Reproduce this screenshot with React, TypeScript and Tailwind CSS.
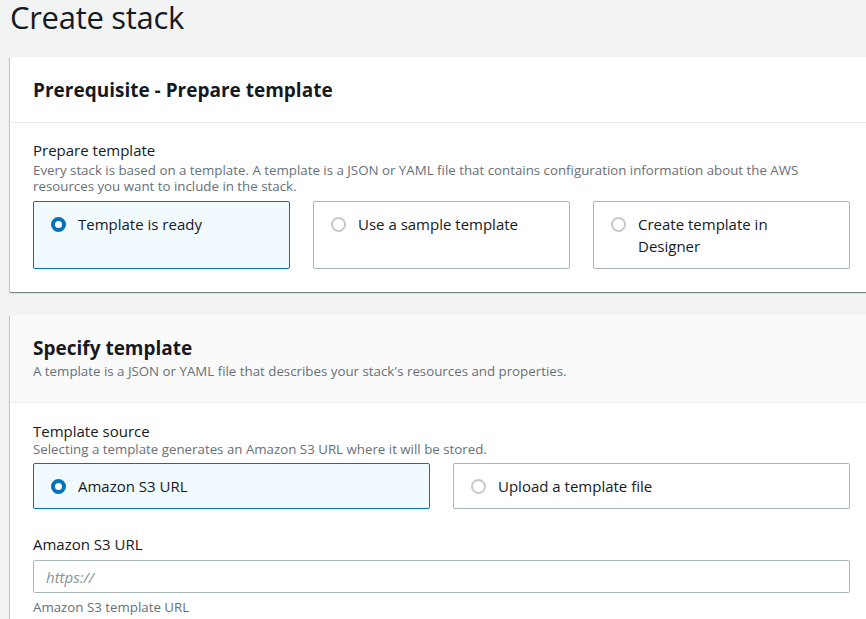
import { useState } from 'react';

const font = { fontFamily: '"Open Sans", "Noto Sans", Arial, sans-serif' };

function Radio({ checked }: { checked: boolean }) {
  return checked ? (
    <span className="mt-[4px] box-border block h-[15px] w-[15px] shrink-0 rounded-full border-[4px] border-[#0073bb] bg-white" />
  ) : (
    <span className="mt-[4px] box-border block h-[15px] w-[15px] shrink-0 rounded-full border-2 border-[#c3c9ca] bg-white" />
  );
}

function Tile({
  label,
  checked,
  onClick,
}: {
  label: string;
  checked: boolean;
  onClick: () => void;
}) {
  return (
    <button
      onClick={onClick}
      className={`flex items-start gap-[12px] rounded-[2px] border px-[17px] py-[11px] text-left text-[15px] leading-[22px] text-[#16191f] ${
        checked ? 'border-[#0073bb] bg-[#f1faff]' : 'border-[#aab7b8] bg-white'
      }`}
    >
      <Radio checked={checked} />
      <span className="pr-[8px]">{label}</span>
    </button>
  );
}

export default function App() {
  const [prepare, setPrepare] = useState('ready');
  const [source, setSource] = useState('s3');

  const cardShadow =
    'shadow-[0_1px_1px_0_rgba(0,28,36,0.3),1px_1px_1px_0_rgba(0,28,36,0.15),-1px_1px_1px_0_rgba(0,28,36,0.15)]';

  return (
    <div className="min-h-screen w-[866px] overflow-hidden bg-[#f2f3f3] pb-10 text-[#16191f]" style={font}>
      {/* Page title */}
      <h1 className="pl-[10px] text-[31px] leading-[34px] font-normal tracking-[-0.3px]">Create stack</h1>

      {/* Prerequisite card */}
      <section className={`ml-[10px] mt-[23px] w-[863px] bg-white ${cardShadow}`}>
        <div className="flex h-[66px] items-center border-b border-[#eaeded] px-[23px]">
          <h2 className="text-[19px] leading-[24px] font-bold">Prerequisite - Prepare template</h2>
        </div>
        <div className="px-[23px] pt-[17px] pb-[23px]">
          <div className="text-[15px] leading-[20px]">Prepare template</div>
          <p className="mt-[2px] text-[13.3px] leading-[16px] text-[#687078]">
            Every stack is based on a template. A template is a JSON or YAML file that contains configuration information about the AWS
            <br />
            resources you want to include in the stack.
          </p>
          <div className="mt-[7px] grid grid-cols-3 gap-[23px]">
            <Tile label="Template is ready" checked={prepare === 'ready'} onClick={() => setPrepare('ready')} />
            <Tile label="Use a sample template" checked={prepare === 'sample'} onClick={() => setPrepare('sample')} />
            <Tile label="Create template in Designer" checked={prepare === 'designer'} onClick={() => setPrepare('designer')} />
          </div>
        </div>
      </section>

      {/* Specify template card */}
      <section className={`ml-[10px] mt-[23px] w-[863px] bg-white ${cardShadow}`}>
        <div className="border-b border-[#eaeded] bg-[#fafafa] px-[23px] pt-[21px] pb-[23px]">
          <h2 className="text-[19px] leading-[24px] font-bold">Specify template</h2>
          <p className="mt-[3px] text-[13.3px] leading-[16px] text-[#687078]">
            A template is a JSON or YAML file that describes your stack's resources and properties.
          </p>
        </div>
        <div className="px-[23px] pt-[18px] pb-[23px]">
          <div className="text-[15px] leading-[20px]">Template source</div>
          <p className="text-[13.3px] leading-[16px] text-[#687078]">
            Selecting a template generates an Amazon S3 URL where it will be stored.
          </p>
          <div className="mt-[6px] grid grid-cols-2 gap-[23px]">
            <Tile label="Amazon S3 URL" checked={source === 's3'} onClick={() => setSource('s3')} />
            <Tile label="Upload a template file" checked={source === 'upload'} onClick={() => setSource('upload')} />
          </div>

          <label className="mt-[25px] block text-[15px] leading-[20px]">Amazon S3 URL</label>
          <input
            className="mt-[6px] block h-[33px] w-full rounded-[2px] border border-[#aab7b8] bg-white px-[12px] text-[15px] outline-none placeholder:italic placeholder:text-[#879596]"
            placeholder="https://"
            style={font}
          />
          <p className="mt-[6px] text-[13.3px] leading-[16px] text-[#687078]">Amazon S3 template URL</p>
        </div>
      </section>
    </div>
  );
}
